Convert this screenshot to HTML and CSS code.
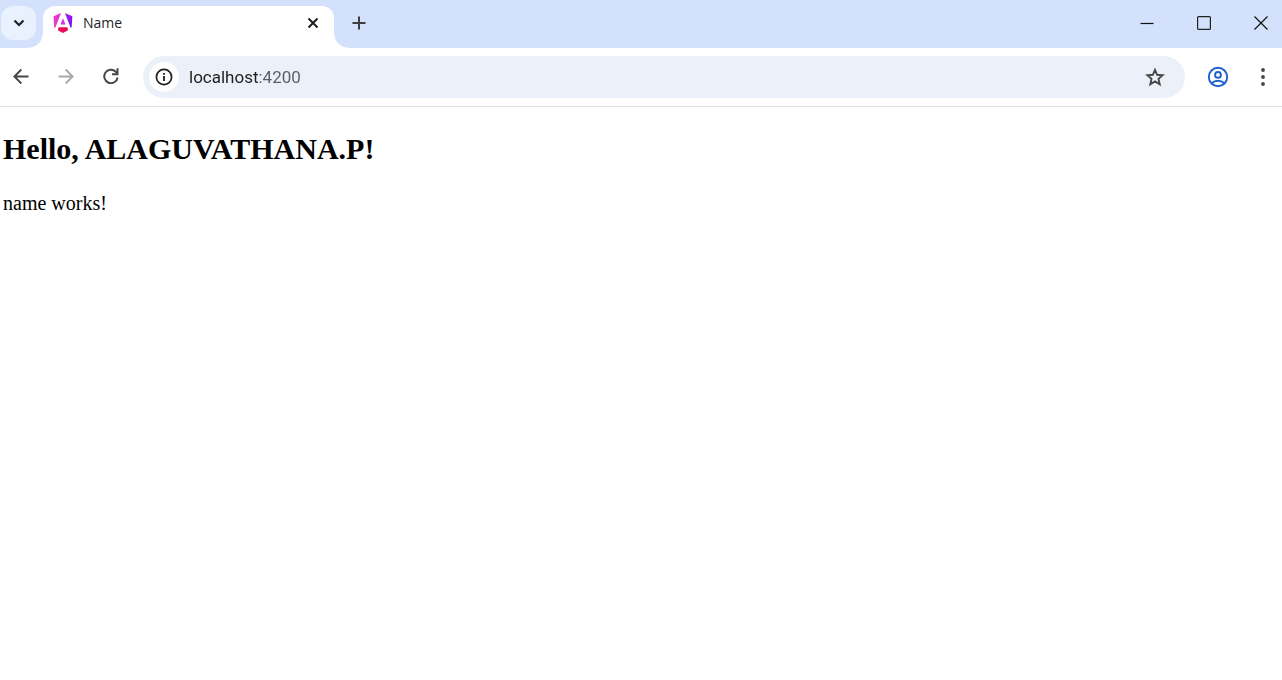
FILE: index.html
```html
<!DOCTYPE html>
<html lang="en">
<head>
<meta charset="utf-8">
<meta name="viewport" content="width=device-width, initial-scale=1">
<title>Name</title>
<link rel="stylesheet" href="styles.css">
</head>
<body>
<header class="browser">
  <div class="tab-strip">
    <button class="tab-search" type="button" aria-label="Search tabs">
      <svg width="12" height="8" viewBox="0 0 12 8"><path d="M1.500 1.500 6 6l4.500-4.500" fill="none" stroke="#1f2023" stroke-width="2.200"/></svg>
    </button>
    <div class="tab">
      <svg class="favicon" viewBox="0 0 223 236">
        <defs>
          <linearGradient id="side" x1="0" y1="0" x2="1" y2="0"><stop offset="0" stop-color="#f03cc8"/><stop offset="1" stop-color="#d92fe0"/></linearGradient>
          <linearGradient id="edge" x1="0" y1="0" x2="1" y2="1"><stop offset="0" stop-color="#b51cf0"/><stop offset="1" stop-color="#6c14ee"/></linearGradient>
          <linearGradient id="base" x1="0" y1="0" x2="1" y2="0"><stop offset="0" stop-color="#f01060"/><stop offset="1" stop-color="#e40a50"/></linearGradient>
        </defs>
        <path fill="url(#edge)" d="m222 39-8 132-14 0L134 0z"/>
        <path fill="url(#base)" d="m172 204-61 32-61-32 10-36h102z"/>
        <path fill="#d735e4" d="m111 63 30 73H81z"/>
        <path fill="url(#side)" d="M22 171H8L0 39 88 0z"/>
      </svg>
      <span class="tab-title">Name</span>
      <button class="tab-close" type="button" aria-label="Close tab">
        <svg width="12" height="12" viewBox="0 0 12 12"><path d="m1.500 1.500 9 9m0-9-9 9" stroke="#1f1f1f" stroke-width="2"/></svg>
      </button>
    </div>
    <button class="new-tab" type="button" aria-label="New tab">
      <svg width="14" height="14" viewBox="0 0 14 14"><path d="M7 .5v13M.5 7h13" stroke="#3c3d40" stroke-width="2"/></svg>
    </button>
    <div class="window-controls">
      <button type="button" aria-label="Minimize"><svg width="14" height="14" viewBox="0 0 14 14"><path d="M.5 7.500h13" stroke="#111" stroke-width="1.200"/></svg></button>
      <button type="button" aria-label="Maximize"><svg width="14" height="14" viewBox="0 0 14 14"><rect x=".6" y=".6" width="12.800" height="12.800" rx="1" fill="none" stroke="#222" stroke-width="1.200"/></svg></button>
      <button type="button" aria-label="Close"><svg width="14" height="14" viewBox="0 0 14 14"><path d="m.5.5 13 13m0-13-13 13" stroke="#111" stroke-width="1.200"/></svg></button>
    </div>
  </div>
  <div class="toolbar">
    <nav class="navigation">
      <button type="button" aria-label="Back"><svg width="16" height="16" viewBox="0 0 16 16"><path d="M15.500 8.500H2M8.300 1.500 1.400 8.500l6.900 7" fill="none" stroke="#474747" stroke-width="1.900"/></svg></button>
      <button type="button" aria-label="Forward"><svg width="16" height="16" viewBox="0 0 16 16"><path d="M.5 8.500H14M7.700 1.500l6.900 7-6.900 7" fill="none" stroke="#a8a8a8" stroke-width="1.900"/></svg></button>
      <button type="button" aria-label="Reload"><svg width="16" height="16" viewBox="0 0 16 16"><path d="M14.600 9.500A6.700 6.700 0 1 1 12.700 3.700l1.800 2" fill="none" stroke="#474747" stroke-width="2"/><path d="M14.500 .3v5.900H9" fill="none" stroke="#474747" stroke-width="2"/></svg></button>
    </nav>
    <div class="address-bar">
      <button class="site-info" type="button" aria-label="View site information">
        <svg width="18" height="18" viewBox="0 0 18 18"><circle cx="9" cy="9" r="7.600" fill="none" stroke="#1f1f1f" stroke-width="1.700"/><path d="M9 8v5M9 5v1.700" stroke="#1f1f1f" stroke-width="1.800"/></svg>
      </button>
      <input class="address" type="text" value="localhost:4200" aria-label="Address">
      <button class="bookmark" type="button" aria-label="Bookmark this page">
        <svg width="20" height="20" viewBox="0 0 20 20"><path d="m10 2.800 2.150 5 5.450.5-4.130 3.600 1.230 5.300L10 14.400l-4.700 2.800 1.230-5.300L2.400 8.300l5.450-.5z" fill="none" stroke="#474747" stroke-width="1.900"/></svg>
      </button>
    </div>
    <button class="profile" type="button" aria-label="Profile">
      <svg width="22" height="22" viewBox="0 0 22 22" fill="none" stroke="#1c5fd0" stroke-width="1.900"><circle cx="11" cy="11" r="9.200"/><circle cx="11" cy="8.900" r="2.900"/><path d="M4.600 17.200c3.700-3.200 9.100-3.200 12.800 0"/></svg>
    </button>
    <button class="menu" type="button" aria-label="Menu">
      <svg width="4" height="18" viewBox="0 0 4 18" fill="#474747"><circle cx="2" cy="2" r="1.900"/><circle cx="2" cy="9" r="1.900"/><circle cx="2" cy="16" r="1.900"/></svg>
    </button>
  </div>
</header>
<main class="page">
  <h2 class="greeting">Hello, ALAGUVATHANA.P!</h2>
  <p class="message">name works!</p>
</main>
</body>
</html>
```

FILE: styles.css
```css
* {
  box-sizing: border-box;
}

body {
  margin: 0;
  background: #fff;
  color: #000;
  font-family: "Liberation Serif", serif;
}

button {
  display: flex;
  align-items: center;
  justify-content: center;
  flex: none;
  padding: 0;
  border: 0;
  background: none;
}

.browser {
  font-family: "Open Sans", sans-serif;
  border-bottom: 1px solid #e1e1e3;
}

.tab-strip {
  display: flex;
  height: 48px;
  padding: 6px 0 0 1px;
  background: #d3e1fd;
}

.tab-search {
  width: 35px;
  height: 34px;
  margin-right: 7px;
  border-radius: 12px;
  background: #e9f0fe;
}

.tab {
  position: relative;
  display: flex;
  align-items: center;
  width: 291px;
  padding: 0 12px 8px 10px;
  border-radius: 12px 12px 0 0;
  background: #fff;
}

/* Curved feet joining the active tab to the toolbar */
.tab::before,
.tab::after {
  content: "";
  position: absolute;
  bottom: 0;
  width: 14px;
  height: 14px;
}

.tab::before {
  right: 100%;
  background: radial-gradient(circle at 0 0, transparent 13px, #fff 14px);
}

.tab::after {
  left: 100%;
  background: radial-gradient(circle at 100% 0, transparent 13px, #fff 14px);
}

.favicon {
  width: 20px;
  height: 20px;
}

.tab-title {
  flex: 1;
  margin-left: 10px;
  color: #1f1f1f;
  font-size: 14px;
  line-height: 22px;
}

.tab-close {
  width: 18px;
  height: 18px;
}

.new-tab {
  width: 34px;
  height: 34px;
  margin-left: 8px;
}

.window-controls {
  display: flex;
  margin-left: auto;
}

.window-controls button {
  width: 57px;
  height: 34px;
}

.window-controls button:last-child {
  width: 58px;
  margin-right: -8px;
}

.toolbar {
  display: flex;
  align-items: center;
  height: 58px;
}

.navigation {
  display: flex;
  padding: 0 10px 2px 0;
  margin-left: -2px;
}

.navigation button {
  width: 45px;
  height: 34px;
}

.address-bar {
  display: flex;
  align-items: center;
  flex: 1;
  height: 42px;
  padding: 0 20px 0 6px;
  border-radius: 21px;
  background: #ebf0f9;
}

.site-info {
  width: 30px;
  height: 30px;
  border-radius: 50%;
  background: #fff;
}

.address {
  flex: 1;
  min-width: 0;
  margin-left: 10px;
  padding: 0;
  border: 0;
  outline: 0;
  /* Host in dark text, port in grey */
  background: linear-gradient(90deg, #1f1f1f 70px, #5a5d61 70px) text;
  color: transparent;
  font-family: Roboto, sans-serif;
  font-size: 17px;
  line-height: 24px;
}

.profile {
  width: 34px;
  height: 34px;
  margin-left: 16px;
}

.menu {
  width: 34px;
  height: 34px;
  margin: 0 2px 0 11px;
}

.page {
  padding: 24px 3px;
}

.greeting {
  margin: 0;
  font-size: 30px;
  line-height: 36px;
}

.message {
  margin: 24px 0 0;
  font-size: 20px;
  line-height: 24px;
}
```
